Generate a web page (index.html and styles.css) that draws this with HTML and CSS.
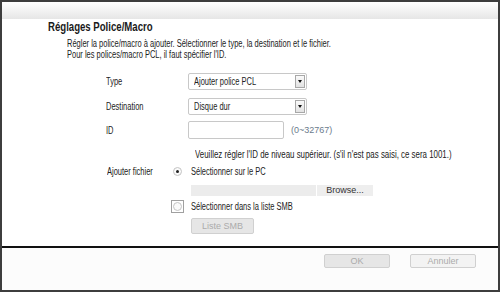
FILE: index.html
```html
<!DOCTYPE html>
<html lang="fr">
<head>
    <meta charset="UTF-8">
    <title>Réglages Police/Macro</title>
    <link rel="stylesheet" href="styles.css">
</head>
<body>

<div class="window">
    <div class="titlebar"></div>

    <div class="content">
        <h2 class="title"><span class="cond">Réglages Police/Macro</span></h2>
        <p class="desc"><span class="cond">Régler la police/macro à ajouter. Sélectionner le type, la destination et le fichier.</span></p>
        <p class="desc"><span class="cond">Pour les polices/macro PCL, il faut spécifier l'ID.</span></p>

        <div class="form">
            <div class="row row-type">
                <span class="label"><span class="cond">Type</span></span>
                <div class="select">
                    <span class="select-text"><span class="cond">Ajouter police PCL</span></span>
                    <span class="select-btn"><span class="arrow"></span></span>
                </div>
            </div>
            <div class="row row-dest">
                <span class="label"><span class="cond">Destination</span></span>
                <div class="select">
                    <span class="select-text"><span class="cond">Disque dur</span></span>
                    <span class="select-btn"><span class="arrow"></span></span>
                </div>
            </div>
            <div class="row row-id">
                <span class="label"><span class="cond">ID</span></span>
                <div class="input"></div>
                <span class="range">(0~32767)</span>
            </div>
            <p class="note"><span class="cond">Veuillez régler l'ID de niveau supérieur. (s'il n'est pas saisi, ce sera 1001.)</span></p>

            <div class="file">
                <span class="label file-label"><span class="cond">Ajouter fichier</span></span>
                <span class="radio-cell"><span class="radio checked"></span></span>
                <span class="option"><span class="cond">Sélectionner sur le PC</span></span>

                <span></span>
                <span></span>
                <div class="path-row">
                    <div class="path"></div>
                    <button class="btn browse">Browse...</button>
                </div>

                <span></span>
                <span class="radio-cell"><span class="radio-box"><span class="radio"></span></span></span>
                <span class="option"><span class="cond">Sélectionner dans la liste SMB</span></span>

                <span></span>
                <span></span>
                <div><button class="btn disabled smb">Liste SMB</button></div>
            </div>
        </div>
    </div>

    <div class="footer">
        <button class="btn disabled ok">OK</button>
        <button class="btn disabled cancel">Annuler</button>
    </div>
</div>

</body>
</html>
```

FILE: styles.css
```css
body {
    margin: 0;
    font-family: "Liberation Sans", Arial, sans-serif;
    color: #222;
    background-color: #fff;
}
/* the screen font is a narrow sans, squeeze the regular one */
.cond {
    display: inline-block;
    white-space: nowrap;
    transform: scaleX(0.75);
    transform-origin: left center;
}
.window {
    width: 500px;
    height: 292px;
    box-sizing: border-box;
    border: 2px solid #3d3d3d;
    display: flex;
    flex-direction: column;
}
.titlebar {
    height: 17px;
    background: linear-gradient(#ffffff, #e6e6e6);
}
.content {
    flex: 1;
    background-color: #fff;
}
.title {
    margin: 2px 0 0 46px;
    font-size: 12px;
    line-height: 12px;
    font-weight: bold;
    color: #1a1a1a;
}
.title .cond {
    transform: scaleX(0.8);
}
.desc {
    margin: 0 0 0 65px;
    font-size: 10px;
    line-height: 11px;
}
.desc:first-of-type {
    margin-top: 5px;
}
.form {
    margin-top: 13px;
    padding-left: 104px;
    font-size: 10px;
}
.row {
    display: flex;
    align-items: center;
}
.row-dest {
    margin-top: 8px;
}
.row-id {
    margin-top: 6px;
}
.label {
    width: 82px;
    flex: none;
}
.select {
    width: 119px;
    height: 17px;
    box-sizing: border-box;
    border: 1px solid #c8c8c8;
    border-radius: 2px;
    display: flex;
    align-items: center;
    background-color: #fff;
}
.select-text {
    flex: 1;
    padding-left: 5px;
}
.select-btn {
    width: 10px;
    height: 13px;
    margin-right: 1px;
    border: 1px solid #a8a8a8;
    box-sizing: border-box;
    background: linear-gradient(#fafafa, #e2e2e2);
    display: flex;
    align-items: center;
    justify-content: center;
}
.arrow {
    width: 0;
    height: 0;
    border-left: 2px solid transparent;
    border-right: 2px solid transparent;
    border-top: 3px solid #111;
}
.input {
    width: 96px;
    height: 18px;
    box-sizing: border-box;
    border: 1px solid #c8c8c8;
    border-radius: 2px;
}
.range {
    margin-left: 7px;
    font-size: 9px;
    color: #6b7b8c;
}
.note {
    margin: 10px 0 0 89px;
    line-height: 11px;
}
.note .cond {
    transform: scaleX(0.79);
}
.file {
    margin-top: 5px;
    display: grid;
    grid-template-columns: 65px 20px auto;
    align-items: center;
}
.file > :nth-child(n+4):nth-child(-n+6) {
    margin-top: 7px;
}
.file > :nth-child(n+7):nth-child(-n+9) {
    margin-top: 4px;
}
.file > :nth-child(n+10) {
    margin-top: 5px;
}
.file-label {
    width: auto;
    padding-left: 1px;
}
.radio-cell {
    display: flex;
    align-items: center;
    height: 13px;
}
.radio {
    width: 7px;
    height: 7px;
    border: 1px solid #c4c4c4;
    border-radius: 50%;
    background-color: #fafafa;
    margin-left: 2px;
    display: flex;
    align-items: center;
    justify-content: center;
}
.radio.checked::after {
    content: "";
    width: 3px;
    height: 3px;
    border-radius: 50%;
    background-color: #222;
}
.radio-box {
    width: 13px;
    height: 13px;
    box-sizing: border-box;
    border: 1px solid #a0a0a0;
    display: flex;
    align-items: center;
    justify-content: center;
}
.radio-box .radio {
    margin-left: 0;
}
.option {
    line-height: 12px;
}
.path-row {
    display: flex;
    height: 11px;
}
.path {
    width: 125px;
    background-color: #ececec;
}
.btn {
    font-family: "Liberation Sans", Arial, sans-serif;
    font-size: 9px;
    padding: 0;
    box-sizing: border-box;
    border-radius: 2px;
    cursor: pointer;
}
.browse {
    width: 56px;
    height: 11px;
    margin-left: 1px;
    border: none;
    background-color: #eeeeee;
    color: #333;
    line-height: 11px;
    border-radius: 0;
}
.disabled {
    border: 1px solid #d0d0d0;
    background-color: #e6e6e6;
    color: #ababab;
}
.smb {
    width: 63px;
    height: 16px;
}
.footer {
    height: 44px;
    border-top: 2px solid #111;
    background-color: #fcfcfc;
    display: flex;
    justify-content: flex-end;
    align-items: flex-start;
    padding: 6px 22px 0 0;
    box-sizing: border-box;
    gap: 20px;
}
.ok, .cancel {
    width: 66px;
    height: 14px;
}
.cancel {
    background-color: #f3f3f3;
}
```
